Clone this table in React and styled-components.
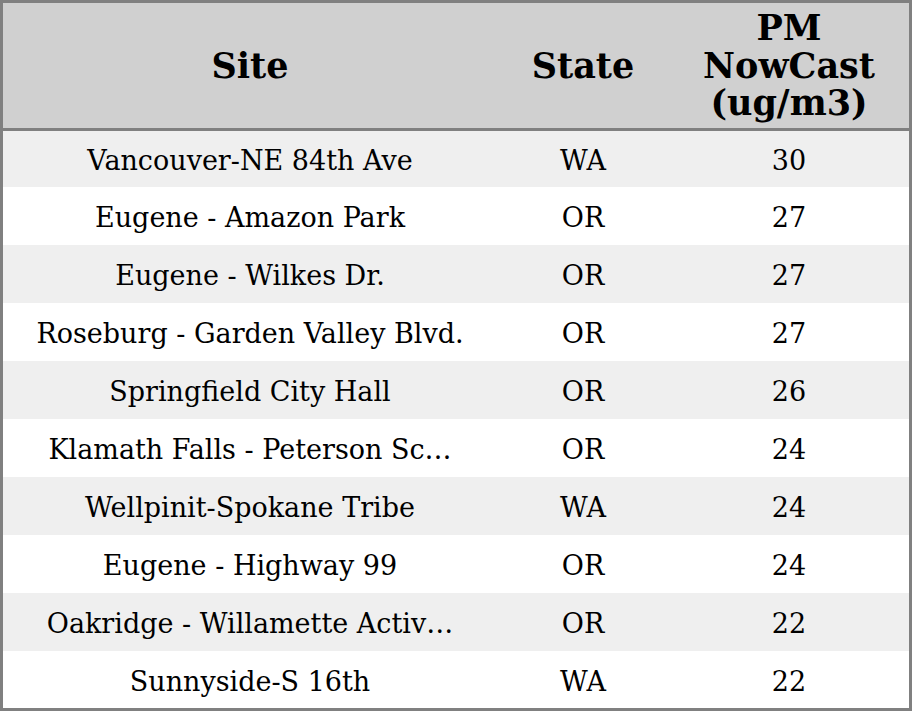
import React from "react";
import styled, { createGlobalStyle } from "styled-components";

const GlobalStyle = createGlobalStyle`
  html, body {
    margin: 0;
    padding: 0;
    background: #ffffff;
  }
`;

const rows = [
  ["Vancouver-NE 84th Ave", "WA", 30],
  ["Eugene - Amazon Park", "OR", 27],
  ["Eugene - Wilkes Dr.", "OR", 27],
  ["Roseburg - Garden Valley Blvd.", "OR", 27],
  ["Springfield City Hall", "OR", 26],
  ["Klamath Falls - Peterson Sc…", "OR", 24],
  ["Wellpinit-Spokane Tribe", "WA", 24],
  ["Eugene - Highway 99", "OR", 24],
  ["Oakridge - Willamette Activ…", "OR", 22],
  ["Sunnyside-S 16th", "WA", 22],
];

// first and last rows come out a little shorter than the rest
const rowHeight = (i, n) => (i === 0 ? 56 : i === n - 1 ? 57 : 58);

function App() {
  return (
    <>
      <GlobalStyle />
      <Table>
        <thead>
          <tr>
            <Th $w={494}>Site</Th>
            <Th $w={172}>State</Th>
            <Th>
              PM
              <br />
              NowCast
              <br />
              (ug/m3)
            </Th>
          </tr>
        </thead>
        <tbody>
          {rows.map((r, i) => (
            <Row key={i} $odd={i % 2 === 0}>
              <Td $h={rowHeight(i, rows.length)}>{r[0]}</Td>
              <Td $h={rowHeight(i, rows.length)}>{r[1]}</Td>
              <Td $h={rowHeight(i, rows.length)}>{r[2]}</Td>
            </Row>
          ))}
        </tbody>
      </Table>
    </>
  );
}

export default App;

const Table = styled.table`
  width: 912px;
  box-sizing: border-box;
  border: 3px solid #808080;
  border-collapse: separate;
  border-spacing: 0;
  font-family: "DejaVu Serif", serif;
  color: #000000;
  table-layout: fixed;
`;

const Th = styled.th`
  width: ${(p) => (p.$w ? `${p.$w}px` : "auto")};
  height: 125px;
  background: #d0d0d0;
  border-bottom: 3px solid #808080;
  font-size: 35px;
  font-weight: bold;
  line-height: 37.5px;
  text-align: center;
  vertical-align: middle;
  padding: 0;
`;

const Row = styled.tr`
  background: ${(p) => (p.$odd ? "#efefef" : "#ffffff")};
`;

const Td = styled.td`
  height: ${(p) => p.$h - 4}px;
  font-size: 27px;
  line-height: 30px;
  text-align: center;
  vertical-align: middle;
  padding: 4px 0 0;
  white-space: nowrap;
`;
